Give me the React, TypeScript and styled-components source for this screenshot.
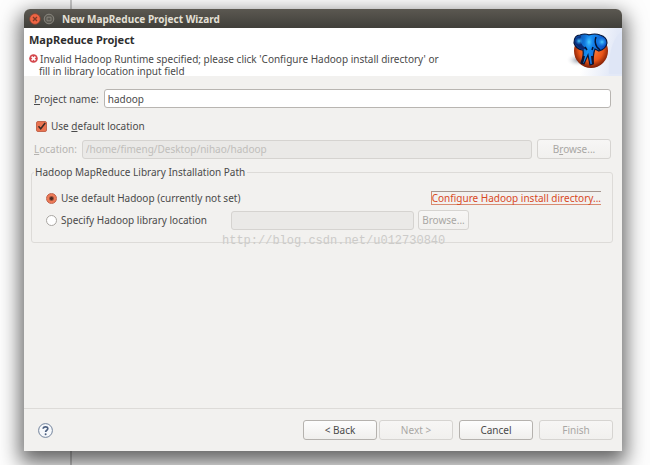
import React, { useState } from "react";
import styled, { createGlobalStyle, css } from "styled-components";

const GlobalStyle = createGlobalStyle`
  * { box-sizing: border-box; }
  html, body, #root { height: 100%; }
  body {
    margin: 0;
    background: #fdfdfd;
    font-family: "Noto Sans", "Open Sans", sans-serif;
    font-size: 10px;
    line-height: 12px;
    color: #4a4a4a;
  }
  input, button { font: inherit; color: inherit; margin: 0; }
`;

const Desktop = styled.div`
  height: 100%;
  padding: 9px 28px 14px 24px;
  overflow: hidden;
  background: linear-gradient(#c9c9c9, #c9c9c9) 70px 0 / 2px 100% no-repeat;
`;

const Dialog = styled.section`
  display: flex;
  flex-direction: column;
  height: 100%;
  border-radius: 6px 6px 0 0;
  background: #f2f1ef;
  box-shadow: 0 8px 20px 4px rgba(0, 0, 0, 0.6);
`;

const TitleBar = styled.header`
  display: flex;
  align-items: center;
  gap: 2px;
  height: 19px;
  padding: 0 5px;
  border-radius: 6px 6px 0 0;
  background: linear-gradient(#5b5851, #403f3a);
`;

const WindowButton = styled.button`
  display: flex;
  padding: 0;
  border: 0;
  background: none;
`;

const WindowTitle = styled.h1`
  margin: 0 0 0 5px;
  font-size: 10px;
  font-weight: 700;
  color: #e4e0d6;
`;

const Banner = styled.div`
  display: flex;
  justify-content: space-between;
  height: 48px;
  background: linear-gradient(100deg, #fff 93%, #e3e9f7 98%);
`;

const BannerText = styled.div`
  padding: 6px 5px;
`;

const BannerTitle = styled.h2`
  margin: 0 0 7px;
  font-size: 11px;
  line-height: 12px;
  font-weight: 700;
  color: #2e2e2e;
`;

const Message = styled.p`
  display: flex;
  gap: 1px;
  margin: 0;
  svg { margin-top: 1px; }
`;

const MessageText = styled.span`
  text-indent: 1px;
`;

const Body = styled.main`
  flex: 1;
  padding: 13px 9px 0 7px;
`;

const Row = styled.div`
  display: flex;
  align-items: center;
  gap: 5px;
  padding: 0 2px 0 3px;
`;

const CheckRow = styled(Row)`
  gap: 4px;
  padding-left: 5px;
  margin: 12px 0 7px;
`;

const Label = styled.label<{ $muted?: boolean }>`
  white-space: nowrap;
  color: ${(p) => (p.$muted ? "#b5b3b0" : "inherit")};
`;

const TextField = styled.input`
  flex: 1;
  min-width: 0;
  height: 19px;
  padding: 0 3px;
  border: 1px solid #b8b5b1;
  border-radius: 3px;
  background: #fff;
  &:disabled {
    border-color: #d5d3d0;
    background: #eae9e7;
    color: #c0bebb;
  }
`;

const Button = styled.button<{ $compact?: boolean }>`
  width: ${(p) => (p.$compact ? 51 : 74)}px;
  height: 20px;
  padding: 0;
  border: 1px solid #b5b2ae;
  border-radius: 3px;
  background: linear-gradient(#fdfdfd, #f0efed);
  white-space: nowrap;
  &:disabled {
    border-color: #d6d4d1;
    background: linear-gradient(#f7f6f5, #f1f0ee);
    color: #a9a7a4;
  }
`;

const choice = css`
  appearance: none;
  flex: none;
  width: 11px;
  height: 11px;
  border: 1px solid #a9a6a2;
  background: #fff;
`;

const CheckBox = styled.input`
  ${choice}
  border-radius: 2px;
  &:checked {
    border-color: #c4674e;
    background: #ea7350 url("data:image/svg+xml,%3Csvg xmlns='http://www.w3.org/2000/svg' viewBox='0 0 9 9'%3E%3Cpath d='M1.5 4.2 3.7 6.8 8.2 1' fill='none' stroke='%233b2a25' stroke-width='1.5'/%3E%3C/svg%3E");
  }
`;

const Radio = styled.input`
  ${choice}
  border-radius: 50%;
  &:checked {
    border-color: #c0614a;
    background: radial-gradient(circle, #4a2a22 0 1px, #ee7b58 3px);
  }
`;

const Group = styled.fieldset`
  min-width: 0;
  margin: 7px 0 0;
  padding: 13px 11px 12px;
  border: 1px solid #dddbd8;
  border-radius: 3px;
`;

const Legend = styled.legend`
  margin-left: -9px;
  padding: 0 2px 0 1px;
`;

const LibraryGrid = styled.div`
  display: grid;
  gap: 5px;
`;

const OptionRow = styled.div`
  display: flex;
  align-items: center;
  gap: 4px;
  padding-left: 3px;
`;

const ConfigureLink = styled.a`
  margin-left: auto;
  border: 1px solid #d88a70;
  border-width: 1px 0 1px 1px;
  border-top-color: #a5968f;
  color: #d9491f;
  text-decoration: none;
`;

const LibraryField = styled(TextField)`
  flex: 0 1 183px;
  margin-left: 20px;
`;

const Watermark = styled.div`
  position: absolute;
  left: 222px;
  top: 234px;
  font: 12px/14px "Liberation Mono", monospace;
  color: #cccbc9;
  pointer-events: none;
`;

const Footer = styled.footer`
  display: flex;
  align-items: center;
  gap: 6px;
  height: 43px;
  padding: 0 9px 0 14px;
  border-top: 1px solid #dddbd8;
`;

const HelpButton = styled(WindowButton)`
  margin-right: auto;
`;

const StepButtons = styled.div`
  display: flex;
  gap: 2px;
`;

const CloseIcon = () => (
  <svg width="12" height="12" viewBox="0 0 12 12">
    <circle cx="6" cy="6" r="5.4" fill="#ee6443" stroke="#7a4333" strokeWidth=".8" />
    <path d="M4 4l4 4M8 4l-4 4" stroke="#7d3a28" strokeWidth="1.3" />
  </svg>
);

const MaximizeIcon = () => (
  <svg width="12" height="12" viewBox="0 0 12 12">
    <circle cx="6" cy="6" r="4.8" fill="#5a5851" stroke="#8b8880" />
    <path d="M4 4.2h4v3.6H4z" fill="none" stroke="#8b8880" strokeWidth=".9" />
  </svg>
);

const ErrorIcon = () => (
  <svg width="9" height="9" viewBox="0 0 9 9">
    <circle cx="4.5" cy="4.5" r="4.3" fill="#d4474c" />
    <path d="M2.6 2.6l3.8 3.8M6.4 2.6L2.6 6.4" stroke="#fff" strokeWidth="1.6" />
  </svg>
);

const HelpIcon = () => (
  <svg width="15" height="15" viewBox="0 0 15 15">
    <circle cx="7.5" cy="7.5" r="6.9" fill="#f6f8fb" stroke="#71829b" />
    <path d="M5.2 5.8C5.2 3.2 9.9 3.1 9.8 5.7C9.7 7.3 7.6 7.3 7.6 9.1" fill="none" stroke="#4d6080" strokeWidth="1.7" />
    <circle cx="7.6" cy="11.2" r="1" fill="#4d6080" />
  </svg>
);

const Elephant = () => (
  <svg width="56" height="48" viewBox="0 0 56 48">
    <defs>
      <radialGradient id="ball" cx=".5" cy=".45" r=".55">
        <stop offset="0" stopColor="#ff8a45" />
        <stop offset=".65" stopColor="#ea5518" />
        <stop offset="1" stopColor="#7a1c05" />
      </radialGradient>
      <radialGradient id="shade">
        <stop offset="0" stopColor="#8d97a5" />
        <stop offset="1" stopColor="#fff" stopOpacity="0" />
      </radialGradient>
      <linearGradient id="hide" x2="1" y2=".2">
        <stop offset="0" stopColor="#0a3590" />
        <stop offset=".5" stopColor="#1590f5" />
        <stop offset="1" stopColor="#0c4ac0" />
      </linearGradient>
      <radialGradient id="glow">
        <stop offset="0" stopColor="#4fd0ff" />
        <stop offset="1" stopColor="#1c8cf5" stopOpacity="0" />
      </radialGradient>
    </defs>
    <path d="M56 3C46 10 42 28 43 46H56z" fill="#dfe6f6" />
    <ellipse cx="12" cy="32" rx="12" ry="7" fill="url(#shade)" />
    <circle cx="25" cy="23" r="17" fill="url(#ball)" />
    <path d="M16 22Q10 21 8 15Q8 7 14 7Q19 5 23 7Q29 5 34 7Q41 9 41 15Q40 21 33 23L29 21Q27 26 27 36L24 37L22 27L18 36L15 35Q18 28 17 22Z" fill="url(#hide)" stroke="#06173c" strokeWidth="1.2" />
    <path d="M9 15Q9 9 15 8Q13 13 17 18L20 20L17 22Q11 20 9 15Z" fill="#0a2a74" />
    <ellipse cx="13" cy="13" rx="4" ry="4" fill="url(#glow)" />
    <ellipse cx="23" cy="14" rx="5" ry="8" fill="url(#glow)" />
    <ellipse cx="36" cy="14" rx="5" ry="5" fill="url(#glow)" />
    <path d="M30 9Q28 14 31 19L34 22M27 19L26 22M19 19L21 22" fill="none" stroke="#051230" strokeWidth="1.5" />
    <path d="M18 28L16 36M26 28L27 36" stroke="#1a1226" strokeWidth="2" />
  </svg>
);

export default function App() {
  const [name, setName] = useState("hadoop");
  return (
    <>
      <GlobalStyle />
      <Desktop>
        <Dialog aria-label="New MapReduce Project Wizard">
          <TitleBar>
            <WindowButton aria-label="Close"><CloseIcon /></WindowButton>
            <WindowButton aria-label="Maximize"><MaximizeIcon /></WindowButton>
            <WindowTitle>New MapReduce Project Wizard</WindowTitle>
          </TitleBar>
          <Banner>
            <BannerText>
              <BannerTitle>MapReduce Project</BannerTitle>
              <Message>
                <ErrorIcon />
                <MessageText>
                  Invalid Hadoop Runtime specified; please click 'Configure Hadoop install directory' or
                  <br />
                  fill in library location input field
                </MessageText>
              </Message>
            </BannerText>
            <Elephant />
          </Banner>
          <Body>
            <Row>
              <Label htmlFor="name"><u>P</u>roject name:</Label>
              <TextField id="name" value={name} onChange={(e) => setName(e.target.value)} />
            </Row>
            <CheckRow>
              <CheckBox id="default" type="checkbox" defaultChecked />
              <Label htmlFor="default">Use <u>d</u>efault location</Label>
            </CheckRow>
            <Row>
              <Label htmlFor="location" $muted><u>L</u>ocation:</Label>
              <TextField id="location" disabled value="/home/fimeng/Desktop/nihao/hadoop" />
              <Button disabled>B<u>r</u>owse...</Button>
            </Row>
            <Group>
              <Legend>Hadoop MapReduce Library Installation Path</Legend>
              <LibraryGrid>
                <OptionRow>
                  <Radio id="useDefault" type="radio" name="library" defaultChecked />
                  <Label htmlFor="useDefault">Use default Hadoop (currently not set)</Label>
                  <ConfigureLink href="#configure">Configure Hadoop install directory...</ConfigureLink>
                </OptionRow>
                <OptionRow>
                  <Radio id="specify" type="radio" name="library" />
                  <Label htmlFor="specify">Specify Hadoop library location</Label>
                  <LibraryField disabled aria-label="Hadoop library location" />
                  <Button disabled $compact>Browse...</Button>
                </OptionRow>
              </LibraryGrid>
            </Group>
            <Watermark>http://blog.csdn.net/u012730840</Watermark>
          </Body>
          <Footer>
            <HelpButton aria-label="Help"><HelpIcon /></HelpButton>
            <StepButtons>
              <Button>&lt; Back</Button>
              <Button disabled>Next &gt;</Button>
            </StepButtons>
            <Button>Cancel</Button>
            <Button disabled>Finish</Button>
          </Footer>
        </Dialog>
      </Desktop>
    </>
  );
}
